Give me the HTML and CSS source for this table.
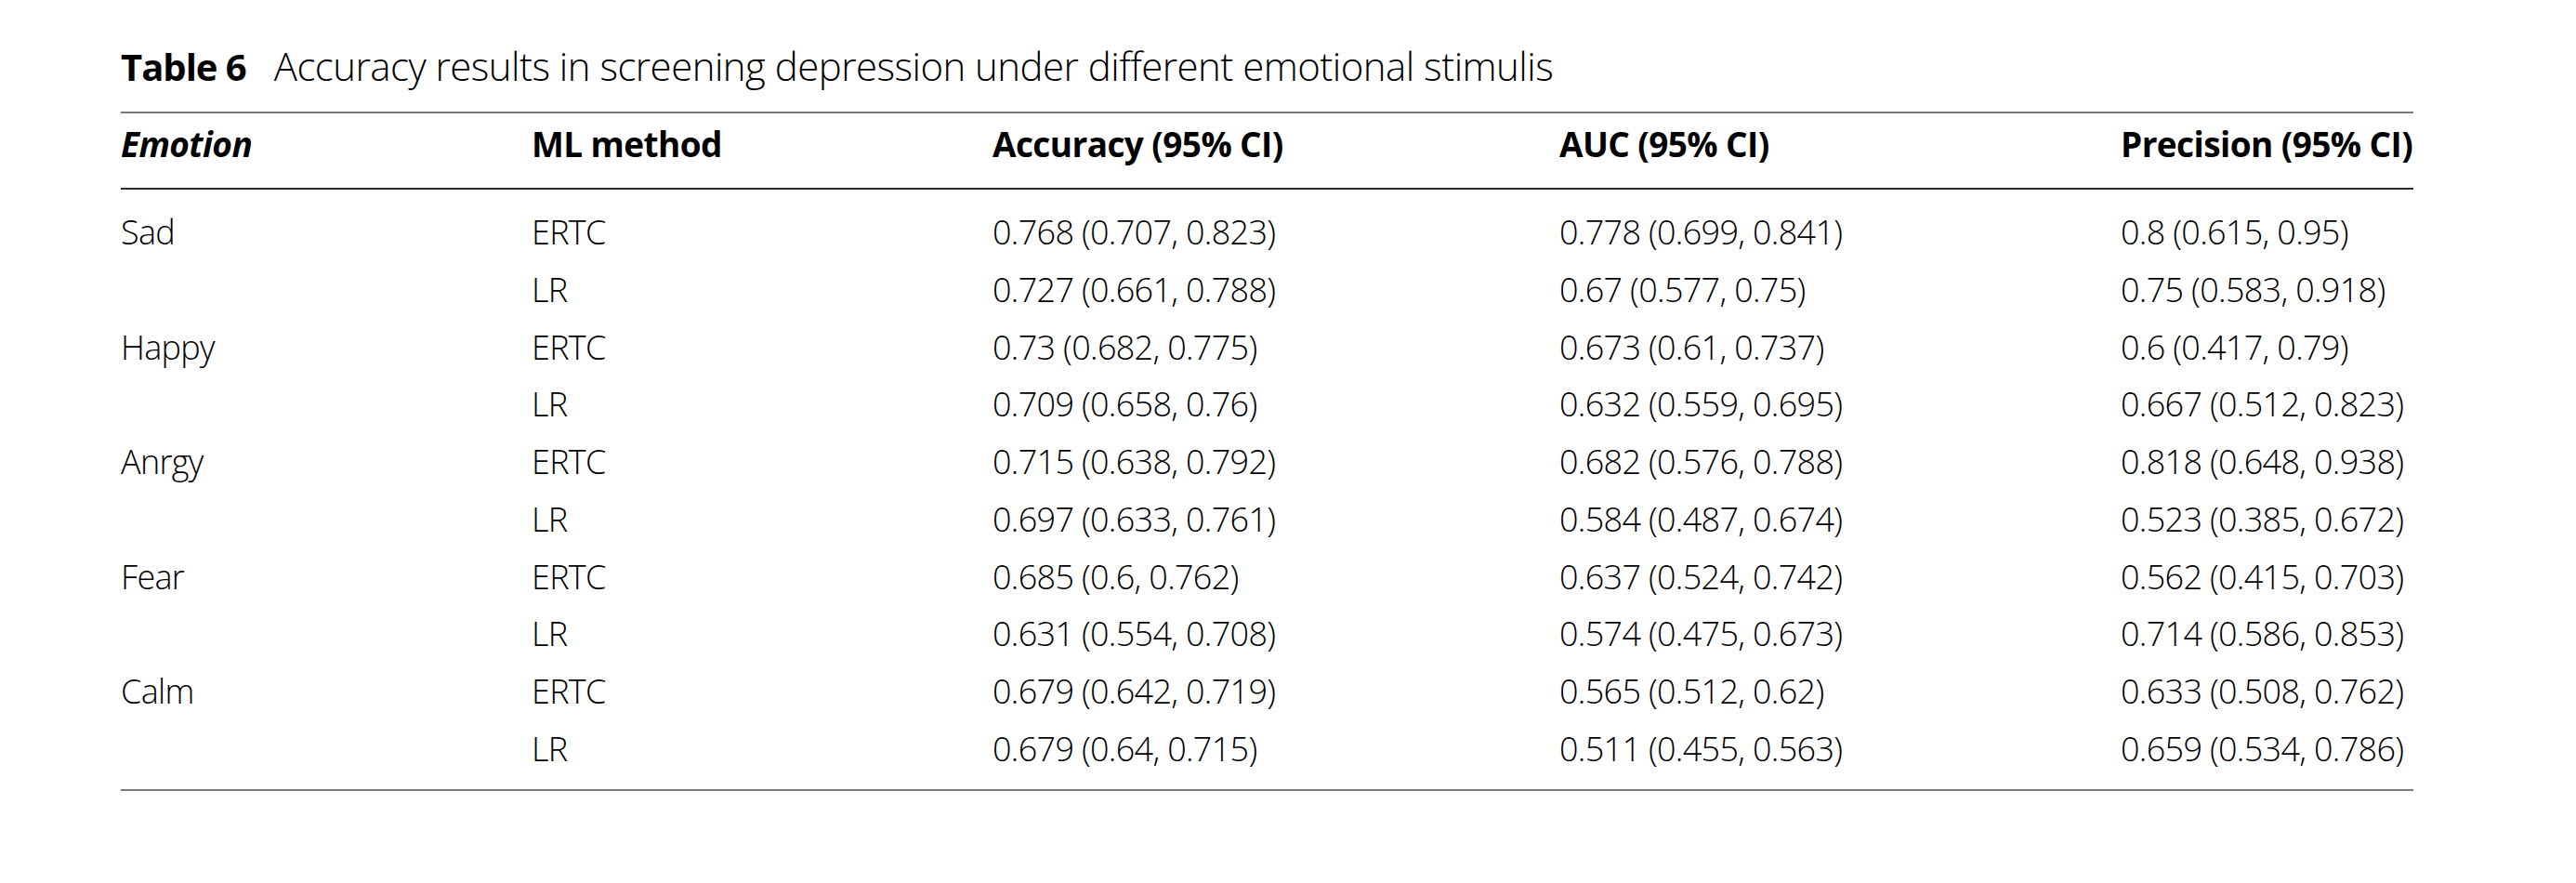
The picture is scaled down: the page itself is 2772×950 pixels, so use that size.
FILE: index.html
```html
<!DOCTYPE html>
<html lang="en">
<head>
<meta charset="utf-8">
<title>Table 6</title>
<link rel="stylesheet" href="styles.css">
</head>
<body>
<div class="page">
  <div class="caption"><span class="label">Table 6</span><span class="ctext">Accuracy results in screening depression under different emotional stimulis</span></div>
  <div class="table">
    <div class="row head">
      <div class="cell em">Emotion</div>
      <div class="cell">ML method</div>
      <div class="cell">Accuracy (95% CI)</div>
      <div class="cell">AUC (95% CI)</div>
      <div class="cell">Precision (95% CI)</div>
    </div>
    <div class="body">
      <div class="row"><div class="cell">Sad</div><div class="cell">ERTC</div><div class="cell">0.768 (0.707, 0.823)</div><div class="cell">0.778 (0.699, 0.841)</div><div class="cell">0.8 (0.615, 0.95)</div></div>
      <div class="row"><div class="cell"></div><div class="cell">LR</div><div class="cell">0.727 (0.661, 0.788)</div><div class="cell">0.67 (0.577, 0.75)</div><div class="cell">0.75 (0.583, 0.918)</div></div>
      <div class="row"><div class="cell">Happy</div><div class="cell">ERTC</div><div class="cell">0.73 (0.682, 0.775)</div><div class="cell">0.673 (0.61, 0.737)</div><div class="cell">0.6 (0.417, 0.79)</div></div>
      <div class="row"><div class="cell"></div><div class="cell">LR</div><div class="cell">0.709 (0.658, 0.76)</div><div class="cell">0.632 (0.559, 0.695)</div><div class="cell">0.667 (0.512, 0.823)</div></div>
      <div class="row"><div class="cell">Anrgy</div><div class="cell">ERTC</div><div class="cell">0.715 (0.638, 0.792)</div><div class="cell">0.682 (0.576, 0.788)</div><div class="cell">0.818 (0.648, 0.938)</div></div>
      <div class="row"><div class="cell"></div><div class="cell">LR</div><div class="cell">0.697 (0.633, 0.761)</div><div class="cell">0.584 (0.487, 0.674)</div><div class="cell">0.523 (0.385, 0.672)</div></div>
      <div class="row"><div class="cell">Fear</div><div class="cell">ERTC</div><div class="cell">0.685 (0.6, 0.762)</div><div class="cell">0.637 (0.524, 0.742)</div><div class="cell">0.562 (0.415, 0.703)</div></div>
      <div class="row"><div class="cell"></div><div class="cell">LR</div><div class="cell">0.631 (0.554, 0.708)</div><div class="cell">0.574 (0.475, 0.673)</div><div class="cell">0.714 (0.586, 0.853)</div></div>
      <div class="row"><div class="cell">Calm</div><div class="cell">ERTC</div><div class="cell">0.679 (0.642, 0.719)</div><div class="cell">0.565 (0.512, 0.62)</div><div class="cell">0.633 (0.508, 0.762)</div></div>
      <div class="row"><div class="cell"></div><div class="cell">LR</div><div class="cell">0.679 (0.64, 0.715)</div><div class="cell">0.511 (0.455, 0.563)</div><div class="cell">0.659 (0.534, 0.786)</div></div>
    </div>
  </div>
</div>
</body>
</html>
```
FILE: styles.css
```css
html, body {
  margin: 0;
  padding: 0;
  background: #ffffff;
}
body {
  font-family: "Open Sans", "Liberation Sans", sans-serif;
  color: #000;
}
.page {
  width: 2467px;
  padding-left: 130px;
  padding-top: 44px;
}
.caption {
  font-size: 42px;
  line-height: 54px;
  height: 54px;
  padding-bottom: 22px;
  white-space: nowrap;
}
.label {
  font-weight: 700;
  font-size: 40px;
  letter-spacing: -1px;
  margin-right: 30px;
}
.ctext {
  font-weight: 300;
  letter-spacing: -0.55px;
}
.table {
  border-top: 2px solid #7a7a7a;
  border-bottom: 2px solid #7a7a7a;
}
.row {
  display: grid;
  grid-template-columns: 442px 496px 610px 604px 315px;
  white-space: nowrap;
}
.head {
  font-weight: 700;
  font-size: 37px;
  line-height: 48px;
  letter-spacing: -0.6px;
  padding-top: 9px;
  padding-bottom: 23px;
  border-bottom: 2px solid #2a2a2a;
}
.head .em {
  font-style: italic;
}
.body {
  padding-top: 15px;
  padding-bottom: 12px;
}
.body .row {
  font-size: 36px;
  font-weight: 300;
  letter-spacing: -0.7px;
  line-height: 61.75px;
  height: 61.75px;
}
```
